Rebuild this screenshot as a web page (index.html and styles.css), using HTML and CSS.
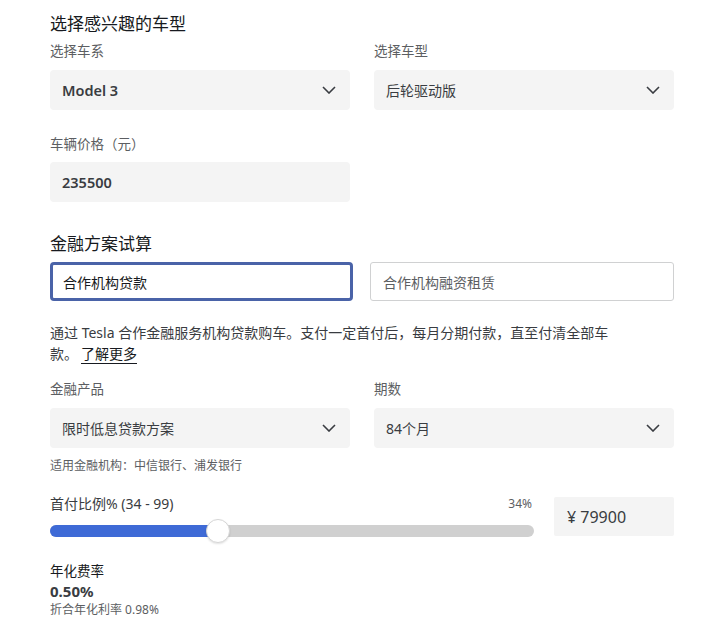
FILE: index.html
```html
<!DOCTYPE html>
<html lang="zh-CN">
<head>
<meta charset="utf-8">
<title>金融方案试算</title>
<link rel="stylesheet" href="styles.css">
</head>
<body>
<main class="page">
  <h2 class="heading first">选择感兴趣的车型</h2>
  <div class="row">
    <div class="field">
      <div class="label">选择车系</div>
      <div class="select bold"><span>Model 3</span>
        <svg class="chev" viewBox="0 0 14 8" width="14" height="8"><path d="M1 1 L7 7 L13 1" fill="none" stroke="#393c41" stroke-width="1.6"/></svg>
      </div>
    </div>
    <div class="field">
      <div class="label">选择车型</div>
      <div class="select"><span>后轮驱动版</span>
        <svg class="chev" viewBox="0 0 14 8" width="14" height="8"><path d="M1 1 L7 7 L13 1" fill="none" stroke="#393c41" stroke-width="1.6"/></svg>
      </div>
    </div>
  </div>
  <div class="row price-row">
    <div class="field">
      <div class="label">车辆价格（元）</div>
      <div class="select bold">235500</div>
    </div>
  </div>

  <h2 class="heading second">金融方案试算</h2>
  <div class="tabs">
    <div class="tab active">合作机构贷款</div>
    <div class="tab">合作机构融资租赁</div>
  </div>
  <div class="desc">
    <div class="desc-line">通过 Tesla 合作金融服务机构贷款购车。支付一定首付后，每月分期付款，直至付清全部车</div>
    <div class="desc-line"><span>款。</span><a class="more">了解更多</a></div>
  </div>

  <div class="row">
    <div class="field">
      <div class="label">金融产品</div>
      <div class="select"><span>限时低息贷款方案</span>
        <svg class="chev" viewBox="0 0 14 8" width="14" height="8"><path d="M1 1 L7 7 L13 1" fill="none" stroke="#393c41" stroke-width="1.6"/></svg>
      </div>
    </div>
    <div class="field">
      <div class="label">期数</div>
      <div class="select"><span>84个月</span>
        <svg class="chev" viewBox="0 0 14 8" width="14" height="8"><path d="M1 1 L7 7 L13 1" fill="none" stroke="#393c41" stroke-width="1.6"/></svg>
      </div>
    </div>
  </div>
  <div class="note">适用金融机构：中信银行、浦发银行</div>

  <div class="down">
    <div class="slider-col">
      <div class="slider-head">
        <span class="slabel">首付比例% (34 - 99)</span>
        <span class="pct">34%</span>
      </div>
      <div class="track">
        <div class="fill" style="width: 168px"></div>
        <div class="thumb" style="left: 156px"></div>
      </div>
    </div>
    <div class="amount">¥ 79900</div>
  </div>

  <div class="rate">
    <div class="rate-title">年化费率</div>
    <div class="rate-val">0.50%</div>
    <div class="rate-sub">折合年化利率 0.98%</div>
  </div>
</main>
</body>
</html>
```
FILE: styles.css
```css
* { box-sizing: border-box; }
html, body { margin: 0; padding: 0; background: #fff; }
body {
  font-family: "Noto Sans", "Noto Sans CJK SC", sans-serif;
  color: #171a20;
}
.page {
  width: 728px;
  padding: 0 54px 0 50px;
}
.heading {
  margin: 0;
  font-size: 17px;
  line-height: 24px;
  font-weight: 400;
  color: #171a20;
}
.heading.first { padding-top: 12px; }
.heading.second { margin-top: 30px; }
.row {
  display: grid;
  grid-template-columns: 300px 300px;
  column-gap: 24px;
}
.field { display: flex; flex-direction: column; }
.label {
  margin-top: 5px;
  font-size: 13.5px;
  line-height: 20px;
  color: #5c5e62;
  margin-bottom: 9px;
}
.price-row { margin-top: 19px; }
.price-row .label { margin-bottom: 8px; }
.select {
  height: 40px;
  background: #f4f4f4;
  border-radius: 4px;
  display: flex;
  align-items: center;
  justify-content: space-between;
  padding: 0 14px 0 12px;
  font-size: 14px;
  color: #393c41;
}
.select.bold { font-weight: 600; color: #393c41; font-size: 14.5px; }
.chev { display: block; }
.tabs {
  margin-top: 6px;
  display: grid;
  grid-template-columns: 303px 304px;
  column-gap: 17px;
}
.tab {
  height: 39px;
  border: 1px solid #d0d1d2;
  border-radius: 3px;
  display: flex;
  align-items: center;
  padding-left: 12px;
  font-size: 14px;
  color: #5c5e62;
}
.tab.active {
  border: 3px solid #4a63a8;
  border-radius: 4px;
  padding-left: 10px;
  color: #171a20;
}
.desc {
  margin: 21px 0 0;
  width: 570px;
  font-size: 14px;
  line-height: 21px;
  color: #393c41;
}
.desc-line { white-space: nowrap; }
.more {
  color: #171a20;
  text-decoration: underline;
  text-underline-offset: 4px;
  text-decoration-thickness: 1px;
  margin-left: 3px;
}
.desc + .row { margin-top: 10px; }
.note {
  margin-top: 9px;
  font-size: 12px;
  line-height: 18px;
  color: #5c5e62;
}
.down {
  margin-top: 18px;
  display: grid;
  grid-template-columns: 484px 120px;
  column-gap: 20px;
  align-items: start;
}
.slider-col { display: flex; flex-direction: column; }
.slider-head {
  display: flex;
  justify-content: space-between;
  align-items: center;
  height: 20px;
}
.slabel { font-size: 14px; color: #393c41; }
.pct { font-size: 12px; color: #5c5e62; padding-right: 2px; }
.track {
  position: relative;
  margin-top: 12px;
  height: 12px;
  border-radius: 6px;
  background: #d0d0d0;
}
.fill {
  height: 12px;
  border-radius: 6px 0 0 6px;
  background: #3e6ad6;
}
.thumb {
  position: absolute;
  top: -6px;
  width: 24px;
  height: 24px;
  border-radius: 50%;
  background: #fff;
  border: 1px solid #d6d6d6;
  box-shadow: 0 1px 2px rgba(0,0,0,0.12);
}
.amount {
  margin-top: 4px;
  height: 39px;
  background: #f4f4f4;
  border-radius: 2px;
  display: flex;
  align-items: center;
  padding-left: 13px;
  font-size: 16px;
  color: #393c41;
}
.rate { margin-top: 24px; }
.rate-title { font-size: 13.5px; line-height: 20px; color: #171a20; }
.rate-val { font-size: 15px; line-height: 20px; font-weight: 700; color: #393c41; }
.rate-sub { font-size: 12px; line-height: 18px; color: #5c5e62; }
```
